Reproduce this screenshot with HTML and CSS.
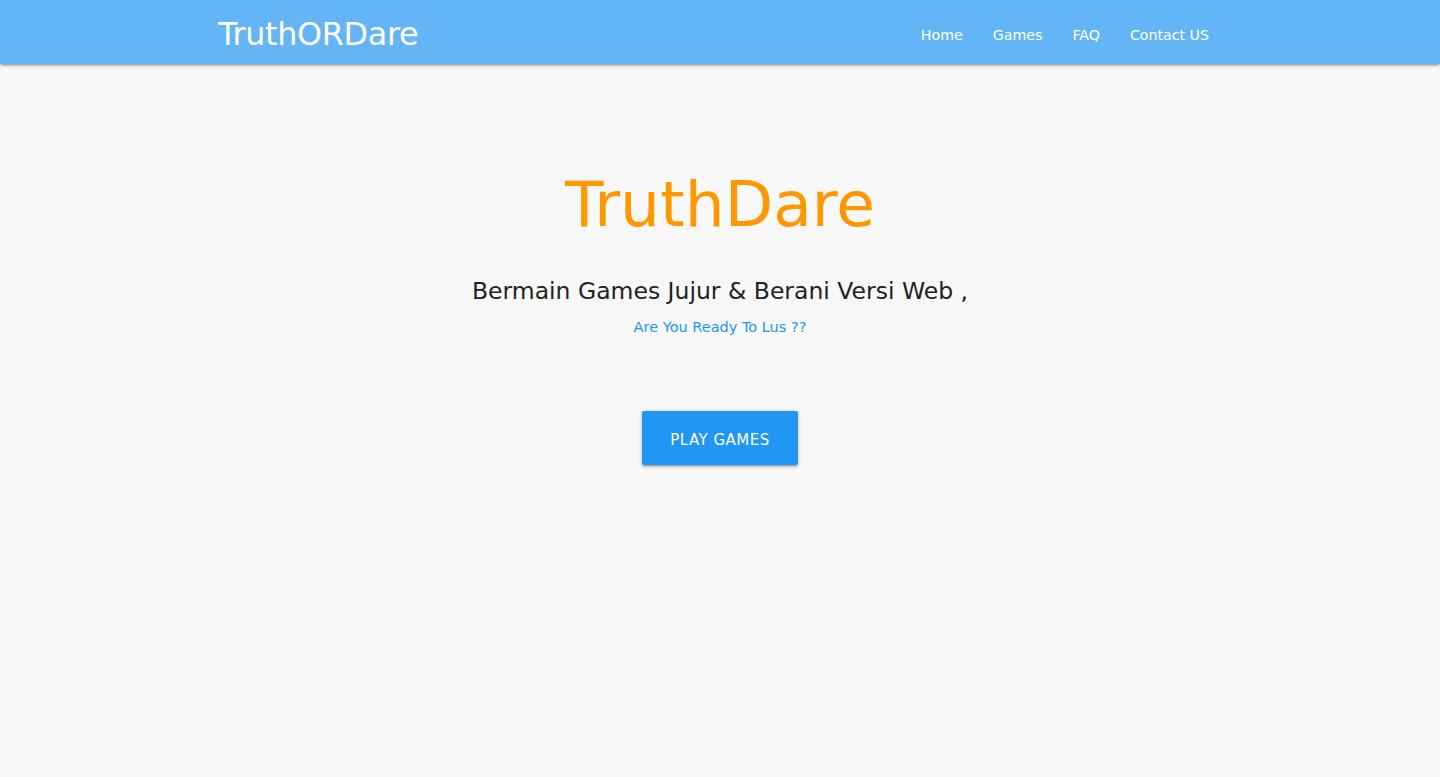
FILE: index.html
```html
<!DOCTYPE html>
<html lang="id">
<head>
<meta charset="utf-8">
<title>TruthORDare</title>
<link rel="stylesheet" href="styles.css">
</head>
<body>
<nav class="nav">
  <div class="nav-wrapper">
    <a href="#" class="brand">TruthORDare</a>
    <ul class="menu">
      <li><a href="#">Home</a></li>
      <li><a href="#">Games</a></li>
      <li><a href="#">FAQ</a></li>
      <li><a href="#">Contact US</a></li>
    </ul>
  </div>
</nav>
<main class="hero">
  <h1 class="title">TruthDare</h1>
  <h5 class="subtitle">Bermain Games Jujur &amp; Berani Versi Web ,</h5>
  <p class="tagline">Are You Ready To Lus ??</p>
  <a href="#" class="btn">PLAY GAMES</a>
</main>
</body>
</html>
```

FILE: styles.css
```css
* { box-sizing: border-box; }
html, body { margin: 0; padding: 0; }
body {
  background: #f8f8f8;
  font-family: "Comic Sans MS", "DejaVu Sans", sans-serif;
  color: #222;
  min-height: 777px;
}
a { text-decoration: none; }
.nav {
  background: #64b5f6;
  height: 64px;
  box-shadow: 0 2px 2px 0 rgba(0,0,0,0.14), 0 3px 1px -2px rgba(0,0,0,0.12), 0 1px 5px 0 rgba(0,0,0,0.2);
}
.nav-wrapper {
  width: 1008px;
  margin: 0 auto;
  height: 64px;
  display: flex;
  align-items: center;
  justify-content: space-between;
}
.brand {
  color: #fff;
  font-size: 31.8px;
  padding-left: 2px;
  padding-top: 2px;
  letter-spacing: -0.3px;
}
.menu {
  list-style: none;
  margin: 0;
  padding: 6px 0 0;
  display: flex;
}
.menu a {
  display: block;
  color: #fff;
  font-size: 14.2px;
  padding: 0 15px;
  line-height: 58px;
}
.hero {
  display: flex;
  flex-direction: column;
  align-items: center;
  padding-top: 104px;
}
.title {
  margin: 0;
  color: #ff9800;
  font-weight: normal;
  font-size: 63px;
  line-height: 74px;
}
.subtitle {
  margin: 35px 0 0;
  font-weight: normal;
  font-size: 23.5px;
  line-height: 29px;
  color: #222;
}
.tagline {
  margin: 10px 0 0;
  color: #2196f3;
  font-size: 14.5px;
  line-height: 22px;
}
.btn {
  margin-top: 73px;
  background: #2196f3;
  color: #fff;
  height: 54px;
  width: 156px;
  padding-top: 3px;
  display: flex;
  align-items: center;
  justify-content: center;
  font-size: 15px;
  letter-spacing: 0.5px;
  border-radius: 2px;
  box-shadow: 0 2px 2px 0 rgba(0,0,0,0.14), 0 3px 1px -2px rgba(0,0,0,0.12), 0 1px 5px 0 rgba(0,0,0,0.2);
}
```
